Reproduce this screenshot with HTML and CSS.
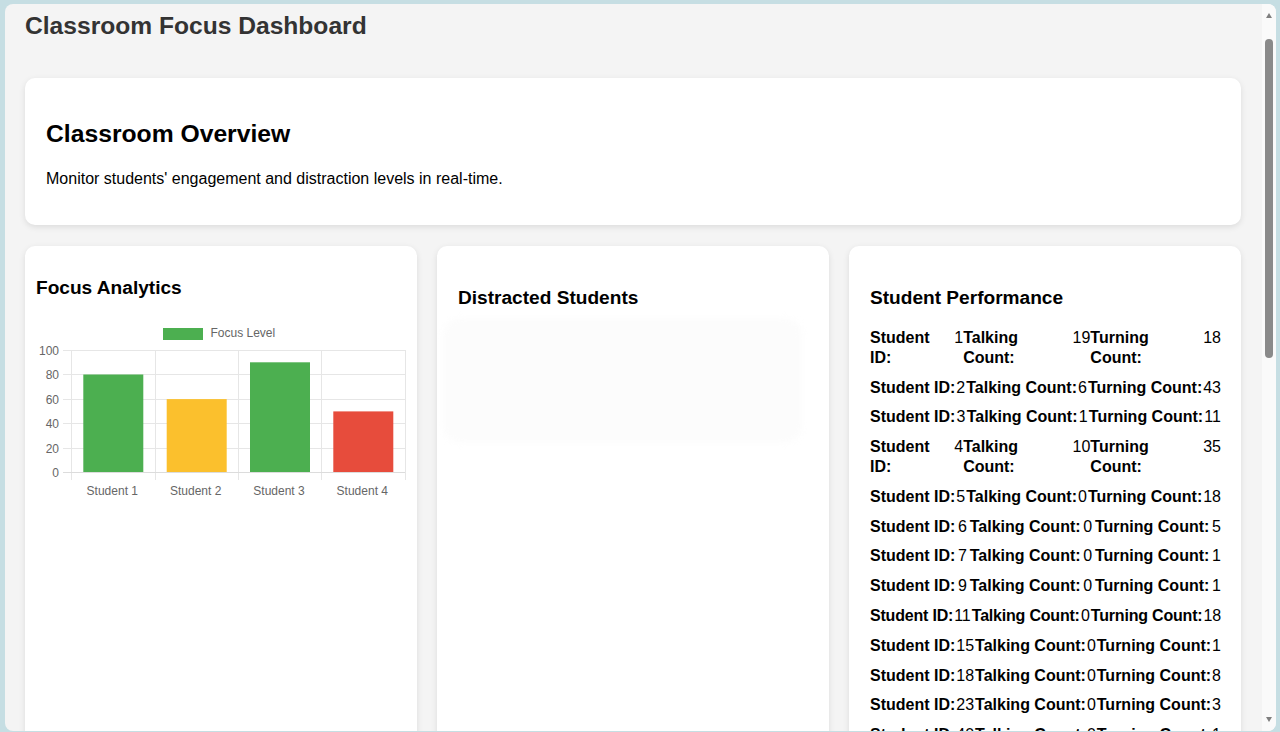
FILE: index.html
```html
<!DOCTYPE html>
<html lang="en">
<head>
<meta charset="utf-8">
<title>Classroom Focus Dashboard</title>
<link rel="stylesheet" href="styles.css">
</head>
<body>
<div class="window">
  <main class="page">
    <h1 class="title">Classroom Focus Dashboard</h1>

    <section class="card overview">
      <h2>Classroom Overview</h2>
      <p>Monitor students' engagement and distraction levels in real-time.</p>
    </section>

    <div class="grid">
      <section class="card chart-card">
        <h3>Focus Analytics</h3>
        <svg class="chart" width="372" height="186" viewBox="0 0 372 186">
          <rect x="128" y="10" width="40" height="12" fill="#4caf50"/>
          <text class="lbl" x="175.5" y="19">Focus Level</text>
          <g class="grid-lines">
            <line x1="28" y1="32.5" x2="370" y2="32.5"/>
            <line x1="28" y1="56.5" x2="370" y2="56.5"/>
            <line x1="28" y1="81.5" x2="370" y2="81.5"/>
            <line x1="28" y1="105.5" x2="370" y2="105.5"/>
            <line x1="28" y1="130.5" x2="370" y2="130.5"/>
            <line x1="36.5" y1="32" x2="36.5" y2="162"/>
            <line x1="120.5" y1="32" x2="120.5" y2="162"/>
            <line x1="203.5" y1="32" x2="203.5" y2="162"/>
            <line x1="286.5" y1="32" x2="286.5" y2="162"/>
            <line x1="370.5" y1="32" x2="370.5" y2="162"/>
          </g>
          <rect x="48.3" y="56.5" width="60" height="98.2" fill="#4caf50"/>
          <rect x="131.7" y="81.1" width="60" height="73.6" fill="#fbc02d"/>
          <rect x="215" y="44.3" width="60" height="110.4" fill="#4caf50"/>
          <rect x="298.3" y="93.4" width="60" height="61.3" fill="#e74c3c"/>
          <line class="axis" x1="28" y1="154.5" x2="370" y2="154.5"/>
          <g class="lbl ylbl">
            <text x="24" y="36.5">100</text>
            <text x="24" y="61">80</text>
            <text x="24" y="85.5">60</text>
            <text x="24" y="110">40</text>
            <text x="24" y="134.5">20</text>
            <text x="24" y="159">0</text>
          </g>
          <g class="lbl xlbl">
            <text x="77.3" y="177">Student 1</text>
            <text x="160.7" y="177">Student 2</text>
            <text x="244" y="177">Student 3</text>
            <text x="327.3" y="177">Student 4</text>
          </g>
        </svg>
      </section>

      <section class="card">
        <h3>Distracted Students</h3>
        <div class="feed"></div>
      </section>

      <section class="card">
        <h3>Student Performance</h3>
        <div class="perf-list">
          <div class="perf-row"><strong>Student ID:</strong><span>1</span><strong>Talking Count:</strong><span>19</span><strong>Turning Count:</strong><span>18</span></div>
          <div class="perf-row"><strong>Student ID:</strong><span>2</span><strong>Talking Count:</strong><span>6</span><strong>Turning Count:</strong><span>43</span></div>
          <div class="perf-row"><strong>Student ID:</strong><span>3</span><strong>Talking Count:</strong><span>1</span><strong>Turning Count:</strong><span>11</span></div>
          <div class="perf-row"><strong>Student ID:</strong><span>4</span><strong>Talking Count:</strong><span>10</span><strong>Turning Count:</strong><span>35</span></div>
          <div class="perf-row"><strong>Student ID:</strong><span>5</span><strong>Talking Count:</strong><span>0</span><strong>Turning Count:</strong><span>18</span></div>
          <div class="perf-row"><strong>Student ID:</strong><span>6</span><strong>Talking Count:</strong><span>0</span><strong>Turning Count:</strong><span>5</span></div>
          <div class="perf-row"><strong>Student ID:</strong><span>7</span><strong>Talking Count:</strong><span>0</span><strong>Turning Count:</strong><span>1</span></div>
          <div class="perf-row"><strong>Student ID:</strong><span>9</span><strong>Talking Count:</strong><span>0</span><strong>Turning Count:</strong><span>1</span></div>
          <div class="perf-row tight"><strong>Student ID:</strong><span>11</span><strong>Talking Count:</strong><span>0</span><strong>Turning Count:</strong><span>18</span></div>
          <div class="perf-row"><strong>Student ID:</strong><span>15</span><strong>Talking Count:</strong><span>0</span><strong>Turning Count:</strong><span>1</span></div>
          <div class="perf-row"><strong>Student ID:</strong><span>18</span><strong>Talking Count:</strong><span>0</span><strong>Turning Count:</strong><span>8</span></div>
          <div class="perf-row"><strong>Student ID:</strong><span>23</span><strong>Talking Count:</strong><span>0</span><strong>Turning Count:</strong><span>3</span></div>
          <div class="perf-row"><strong>Student ID:</strong><span>40</span><strong>Talking Count:</strong><span>0</span><strong>Turning Count:</strong><span>1</span></div>
          <div class="perf-row"><strong>Student ID:</strong><span>42</span><strong>Talking Count:</strong><span>0</span><strong>Turning Count:</strong><span>2</span></div>
          <div class="perf-row"><strong>Student ID:</strong><span>45</span><strong>Talking Count:</strong><span>0</span><strong>Turning Count:</strong><span>1</span></div>
        </div>
      </section>
    </div>
  </main>

  <div class="scrollbar" aria-hidden="true">
    <span class="arrow up"></span>
    <span class="thumb"></span>
    <span class="arrow down"></span>
  </div>
</div>
</body>
</html>
```

FILE: styles.css
```css
* {
  box-sizing: border-box;
}

html,
body {
  height: 732px;
}

body {
  margin: 0;
  padding: 4px 4px 0 5px;
  background: #c6dee3;
  overflow: hidden;
  font-family: "Liberation Sans", Arial, Helvetica, sans-serif;
  color: #000;
}

.window {
  display: flex;
  height: 727px;
  background: #f4f4f4;
  border-radius: 8px;
  overflow: hidden;
}

.page {
  flex: 1;
  min-width: 0;
  padding: 8px 21px 0 20px;
  overflow: hidden;
}

.title {
  margin: 0 0 38px;
  font-size: 24.6px;
  line-height: 28px;
  font-weight: bold;
  color: #333;
}

.card {
  background: #fff;
  border-radius: 10px;
  box-shadow: 0 2px 6px rgba(0, 0, 0, 0.1);
  padding: 20px 20px 20px 21px;
}

.overview h2 {
  margin: 22px 0 22px;
  font-size: 24.7px;
  line-height: 28px;
}

.overview p {
  margin: 0 0 17px;
  font-size: 16px;
  line-height: 18px;
}

.grid {
  display: grid;
  grid-template-columns: repeat(3, 1fr);
  gap: 20px;
  margin-top: 21px;
}

.card h3 {
  margin: 21px 0 19px;
  font-size: 19.1px;
  line-height: 22px;
}

.chart-card {
  padding: 10px 10px 10px 11px;
}

.chart {
  display: block;
  margin-left: -1px;
}

.grid-lines line {
  stroke: #e6e6e6;
  stroke-width: 1;
}

.axis {
  stroke: #dcdcdc;
  stroke-width: 1;
}

.lbl {
  font-family: "Liberation Sans", Arial, sans-serif;
  font-size: 12px;
  fill: #666;
}

.ylbl {
  text-anchor: end;
}

.xlbl {
  text-anchor: middle;
}

.feed {
  margin: -10px 0 0 -15px;
  width: 359px;
  height: 125px;
  border-radius: 18px;
  background: #fcfcfc;
  filter: blur(3px);
}

.perf-row {
  display: flex;
  justify-content: space-between;
  font-size: 16px;
  line-height: 19.8px;
  margin-bottom: 10px;
}

.perf-row strong {
  font-weight: bold;
}

.perf-row.tight {
  letter-spacing: -0.2px;
}

.scrollbar {
  width: 14px;
  flex: none;
  background: #fafafa;
  display: flex;
  flex-direction: column;
  align-items: center;
}

.arrow {
  width: 0;
  height: 0;
  border-left: 3.5px solid transparent;
  border-right: 3.5px solid transparent;
}

.arrow.up {
  margin-top: 9px;
  border-bottom: 5px solid #7f7f7f;
}

.arrow.down {
  margin-top: auto;
  margin-bottom: 9px;
  border-top: 5px solid #7f7f7f;
}

.thumb {
  margin-top: 21px;
  width: 8px;
  height: 319px;
  border-radius: 4px;
  background: #8a8a8a;
}
```
